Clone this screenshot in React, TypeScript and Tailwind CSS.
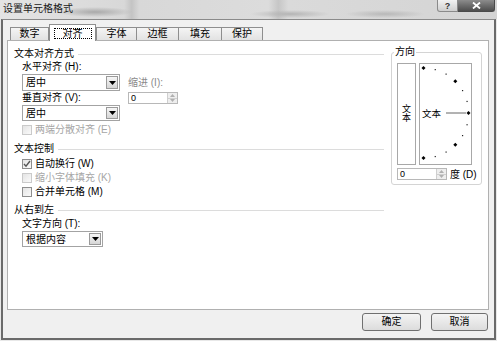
import React from 'react';

const font = "font-['Liberation_Sans','Noto_Sans_CJK_SC',sans-serif]";

function Dropdown({ value, className }: { value: string; className: string }) {
  return (
    <div className={`flex items-stretch border border-[#a3a3a3] bg-white ${className}`}>
      <span className="flex-1 pl-[3px] text-[10px] leading-[15px] text-black">{value}</span>
      <span className="m-px flex w-[12px] items-center justify-center border border-[#9a9a9a] bg-gradient-to-b from-[#f6f6f6] to-[#d6d6d6]">
        <svg width="7" height="4" viewBox="0 0 7 4">
          <path d="M0 0h7L3.5 4z" fill="#000" />
        </svg>
      </span>
    </div>
  );
}

function Spinner({ className }: { className: string }) {
  return (
    <div className={`flex h-[12px] border border-[#b8b8b8] bg-white ${className}`}>
      <span className="flex-1 pl-[2px] text-[9px] leading-[10px] text-black">0</span>
      <span className="flex w-[10px] flex-col border-l border-[#cfcfcf]">
        <span className="flex flex-1 items-center justify-center border-b border-[#cfcfcf] bg-[#eeeeee]">
          <svg width="5" height="3" viewBox="0 0 5 3">
            <path d="M0 3h5L2.5 0z" fill="#b0b0b0" />
          </svg>
        </span>
        <span className="flex flex-1 items-center justify-center bg-[#eeeeee]">
          <svg width="5" height="3" viewBox="0 0 5 3">
            <path d="M0 0h5L2.5 3z" fill="#b0b0b0" />
          </svg>
        </span>
      </span>
    </div>
  );
}

function Check({ label, checked, disabled }: { label: string; checked?: boolean; disabled?: boolean }) {
  return (
    <div className="flex h-[12px] items-center gap-[3px]">
      <span
        className={`flex h-[10px] w-[10px] items-center justify-center border bg-gradient-to-br from-[#e4e4e4] to-[#fafafa] ${
          disabled ? 'border-[#cacaca]' : 'border-[#8e8e8e]'
        }`}
      >
        {checked && (
          <svg width="8" height="8" viewBox="0 0 8 8">
            <path d="M1 4l2 2.2L7 1" stroke="#555" strokeWidth="1.4" fill="none" />
          </svg>
        )}
      </span>
      <span className={`text-[10px] leading-[12px] ${disabled ? 'text-[#a6a6a6]' : 'text-black'}`}>{label}</span>
    </div>
  );
}

function Section({ title }: { title: string }) {
  return (
    <div className="flex h-[12px] items-center gap-[4px]">
      <span className="text-[10px] leading-[12px] text-black">{title}</span>
      <span className="h-px flex-1 bg-[#dcdcdc]" />
    </div>
  );
}

function Tab({ label, className }: { label: string; className: string }) {
  return (
    <div
      className={`mb-px flex h-[13px] items-center justify-center border border-b-0 border-[#8e8e8e] bg-gradient-to-b from-[#f4f4f4] to-[#e2e2e2] text-[10px] leading-[12px] text-black ${className}`}
    >
      {label}
    </div>
  );
}

function Dial() {
  const cx = 3.5;
  const cy = 49;
  const r = 45;
  const angles = [90, 75, 60, 45, 30, 15, 0, -15, -30, -45, -60, -75, -90];
  return (
    <svg width="51" height="100" viewBox="0 0 51 100">
      {angles.map((a) => {
        const x = cx + r * Math.cos((a * Math.PI) / 180);
        const y = cy - r * Math.sin((a * Math.PI) / 180);
        const big = a % 45 === 0;
        return big ? (
          <path key={a} d={`M${x - 2} ${y}L${x} ${y - 2}L${x + 2} ${y}L${x} ${y + 2}z`} fill="#000" />
        ) : (
          <rect key={a} x={x - 0.5} y={y - 0.5} width="1.2" height="1.2" fill="#222" />
        );
      })}
      <line x1="26" y1={cy} x2="46" y2={cy} stroke="#666" strokeWidth="1" />
      <text x="2" y={cy + 3.5} fontSize="9.5" fill="#000" fontFamily="Noto Sans CJK SC, sans-serif">
        文本
      </text>
    </svg>
  );
}

export default function App() {
  return (
    <div className={`h-[341px] w-[497px] overflow-hidden bg-[#e8e8e8] ${font}`}>
      {/* Title bar */}
      <div className="flex h-[19px] items-start justify-between bg-[radial-gradient(ellipse_38px_5px_at_95px_12px,#a9a9a9,transparent),radial-gradient(ellipse_40px_4px_at_290px_14px,#b4b4b4,transparent),radial-gradient(ellipse_40px_4px_at_385px_14px,#b8b8b8,transparent),linear-gradient(90deg,#e4e4e4_0%,#d8d8d8_25%,#c4c4c4_26.5%,#d8d8d8_28%,#dcdcdc_54%,#c6c6c6_56%,#dadada_58%,#d4d4d4_100%)]">
        <span className="pl-[3px] pt-[3px] text-[10px] leading-[12px] text-[#1a1a1a]">设置单元格格式</span>
        <div className="mr-[2px] flex">
          <span className="flex h-[12px] w-[21px] items-center justify-center rounded-bl-[3px] border border-t-0 border-[#8a8a8a] bg-gradient-to-b from-[#f2f2f2] to-[#cfcfcf] text-[9px] font-bold leading-[10px] text-[#333]">
            ?
          </span>
          <span className="flex h-[12px] w-[37px] items-center justify-center rounded-br-[3px] border border-t-0 border-l-0 border-[#4a4a4a] bg-gradient-to-b from-[#8c8c8c] to-[#4e4e4e]">
            <svg width="9" height="7" viewBox="0 0 9 7">
              <path d="M1 0.5l7 6M8 0.5l-7 6" stroke="#fff" strokeWidth="1.8" />
            </svg>
          </span>
        </div>
      </div>

      {/* Dialog body */}
      <div className="ml-[1px] flex h-[321px] w-[495px] flex-col border-2 border-t border-[#6a6a6a] border-t-[#8a8a8a] bg-[#f0f0f0] pl-[4px] pr-[5px] pt-[4px]">
        {/* Tabs */}
        <div className="relative z-10 -mb-px flex h-[17px] items-end pl-[3px]">
          <Tab label="数字" className="w-[39px]" />
          <div className="relative z-10 flex h-[17px] w-[47px] justify-center border border-b-0 border-[#8e8e8e] bg-white pt-[3px]">
            <span className="h-[11px] border border-dotted border-black px-[8px] text-[10px] leading-[9px] text-black">对齐</span>
          </div>
          <Tab label="字体" className="w-[41px]" />
          <Tab label="边框" className="-ml-px w-[43px]" />
          <Tab label="填充" className="-ml-px w-[44px]" />
          <Tab label="保护" className="-ml-px w-[42px]" />
        </div>

        {/* Panel */}
        <div className="flex h-[270px] border border-[#b0b0b0] bg-white">
          <div className="flex-1 pl-[6px] pt-[7px]">
            <Section title="文本对齐方式" />
            <div className="pl-[8px]">
              <div className="flex">
                <div className="flex w-[98px] flex-col">
                  <span className="mt-px text-[10px] leading-[12px] text-black">水平对齐 (H):</span>
                  <Dropdown value="居中" className="mt-px h-[17px]" />
                  <span className="mt-px text-[10px] leading-[12px] text-black">垂直对齐 (V):</span>
                  <Dropdown value="居中" className="mt-px h-[16px]" />
                </div>
                <div className="ml-[8px] flex flex-col pt-[17px]">
                  <span className="text-[10px] leading-[12px] text-[#8a8a8a]">缩进 (I):</span>
                  <Spinner className="mt-[3px] w-[50px]" />
                </div>
              </div>
              <div className="mt-[3px]">
                <Check label="两端分散对齐 (E)" disabled />
              </div>
            </div>

            <div className="mt-[7px]">
              <Section title="文本控制" />
            </div>
            <div className="mt-[3px] flex flex-col gap-[2px] pl-[8px]">
              <Check label="自动换行 (W)" checked />
              <Check label="缩小字体填充 (K)" disabled />
              <Check label="合并单元格 (M)" />
            </div>

            <div className="mt-[6px]">
              <Section title="从右到左" />
            </div>
            <div className="flex flex-col pl-[8px]">
              <span className="mt-[2px] text-[10px] leading-[12px] text-black">文字方向 (T):</span>
              <Dropdown value="根据内容" className="mt-px h-[16px] w-[81px]" />
            </div>
          </div>

          {/* Orientation */}
          <fieldset className="ml-[7px] mr-[6px] mt-[5px] h-[139px] w-[91px] rounded-[3px] border border-[#d4d4d4] pl-[5px] pr-0 pt-[5px]">
            <legend className="-ml-[3px] px-[1px] text-[10px] leading-[12px] text-black">方向</legend>
            <div className="flex h-[102px] gap-[3px]">
              <div className="flex w-[19px] flex-col items-center justify-center border border-[#a8a8a8] text-[9px] leading-[9px] text-black">
                <span>文</span>
                <span>本</span>
              </div>
              <div className="w-[53px] border border-[#a8a8a8]">
                <Dial />
              </div>
            </div>
            <div className="mt-[3px] flex items-center whitespace-nowrap">
              <Spinner className="h-[11px] w-[50px] shrink-0" />
              <span className="ml-[3px] text-[10px] leading-[11px] text-black">度 (D)</span>
            </div>
          </fieldset>
        </div>

        {/* Buttons */}
        <div className="mt-[3px] flex justify-end gap-[10px] pr-px">
          <button className="h-[18px] w-[59px] rounded-[3px] border border-[#707070] bg-gradient-to-b from-[#f4f4f4] to-[#dcdcdc] text-[10px] leading-[12px] text-black">
            确定
          </button>
          <button className="h-[18px] w-[57px] rounded-[3px] border border-[#707070] bg-gradient-to-b from-[#f4f4f4] to-[#dcdcdc] text-[10px] leading-[12px] text-black">
            取消
          </button>
        </div>
      </div>
    </div>
  );
}
